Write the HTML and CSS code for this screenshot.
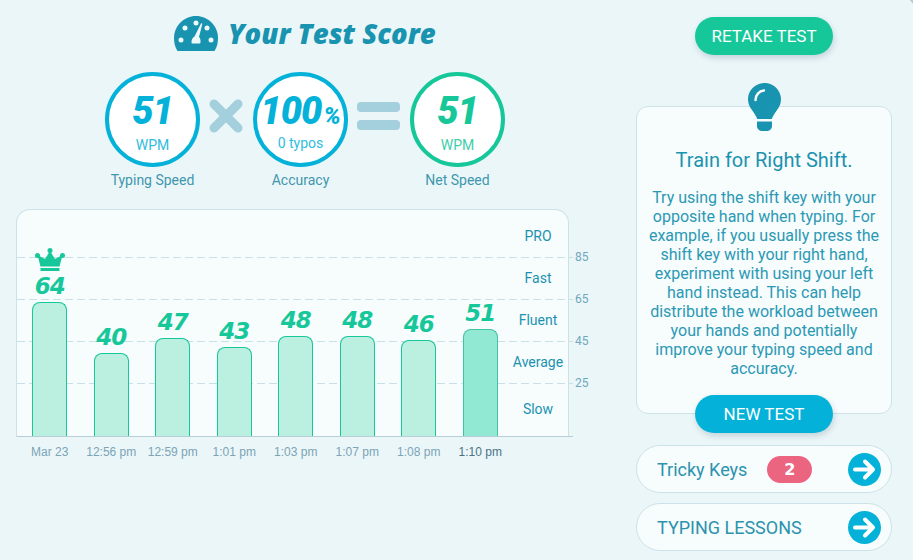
FILE: index.html
```html
<!DOCTYPE html>
<html lang="en">
<head>
  <meta charset="UTF-8">
  <title>Your Test Score</title>
  <link rel="stylesheet" href="styles.css">
</head>
<body>
<div class="corner"></div>
<div class="page">
  <div class="left">
    <h1 class="title">
      <svg class="gauge" viewBox="0 0 44 36" width="44" height="36">
        <path fill="#1893b0" d="M22 1C10 1 0 11 0 23c0 5 1 9 3.500 13h37c2.500-4 3.500-8 3.500-13C44 11 34 1 22 1z"/>
        <g fill="#eef9fb">
          <circle cx="22" cy="8" r="2.500"/>
          <circle cx="11" cy="13" r="2.500"/>
          <circle cx="33" cy="13" r="2.500"/>
          <circle cx="7" cy="25" r="2.500"/>
          <circle cx="37" cy="25" r="2.500"/>
          <path d="M27 8.500c.6-.4 1.200-.2 1.300.5L25 22c1.300 1.300 1.800 3.300 1.500 5.500-.1.600-.5 1-1 1h-7c-.6 0-1-.4-1-1-.2-2.400 1-4.800 3-6z"/>
        </g>
      </svg>
      Your Test Score
    </h1>

    <div class="formula">
      <div class="stat">
        <div class="ring">
          <span class="big">51</span>
          <span class="unit">WPM</span>
        </div>
        <div class="stat-label">Typing Speed</div>
      </div>
      <svg class="op op-times" viewBox="0 0 34 34" width="34" height="34">
        <path d="M5 5l24 24M29 5L5 29" stroke="#a3d0dc" stroke-width="9" stroke-linecap="round"/>
      </svg>
      <div class="stat">
        <div class="ring">
          <span class="big">100<small>%</small></span>
          <span class="unit unit-typos">0 typos</span>
        </div>
        <div class="stat-label">Accuracy</div>
      </div>
      <div class="op op-equals"><i></i><i></i></div>
      <div class="stat">
        <div class="ring ring-green">
          <span class="big">51</span>
          <span class="unit">WPM</span>
        </div>
        <div class="stat-label">Net Speed</div>
      </div>
    </div>

    <div class="chart">
      <div class="zones">
        <div class="zone"><span class="zone-name">PRO</span><span class="tick">85</span></div>
        <div class="zone"><span class="zone-name">Fast</span><span class="tick">65</span></div>
        <div class="zone"><span class="zone-name">Fluent</span><span class="tick">45</span></div>
        <div class="zone"><span class="zone-name">Average</span><span class="tick">25</span></div>
        <div class="zone"><span class="zone-name">Slow</span></div>
      </div>
      <div class="bars">
        <div class="col">
          <svg class="crown" viewBox="0 0 30 23" width="30" height="23">
            <g fill="#16c79a">
              <circle cx="15" cy="2.500" r="2.500"/>
              <circle cx="2.500" cy="7.500" r="2.500"/>
              <circle cx="27.500" cy="7.500" r="2.500"/>
              <path d="M15 3l5 8 7.500-4-3 11.500h-19L2.500 7 10 11z"/>
              <path d="M5.500 20h19v3h-19z"/>
            </g>
          </svg>
          <span class="val">64</span><div class="bar" style="height:134px"></div>
        </div>
        <div class="col"><span class="val">40</span><div class="bar" style="height:83px"></div></div>
        <div class="col"><span class="val">47</span><div class="bar" style="height:98px"></div></div>
        <div class="col"><span class="val">43</span><div class="bar" style="height:89px"></div></div>
        <div class="col"><span class="val">48</span><div class="bar" style="height:100px"></div></div>
        <div class="col"><span class="val">48</span><div class="bar" style="height:100px"></div></div>
        <div class="col"><span class="val">46</span><div class="bar" style="height:96px"></div></div>
        <div class="col"><span class="val">51</span><div class="bar bar-now" style="height:107px"></div></div>
      </div>
    </div>
    <div class="times">
      <span>Mar 23</span>
      <span>12:56 pm</span>
      <span>12:59 pm</span>
      <span>1:01 pm</span>
      <span>1:03 pm</span>
      <span>1:07 pm</span>
      <span>1:08 pm</span>
      <span class="time-now">1:10 pm</span>
    </div>
  </div>

  <div class="right">
    <button class="pill pill-green">RETAKE TEST</button>
    <svg class="bulb" viewBox="0 0 33 48" width="33" height="48">
      <path fill="#1893b0" d="M16.500 0C7.400 0 0 7.300 0 16.300c0 4 1.400 7.300 3.600 10.200 2.400 3.200 4.700 6.700 5.600 9.500h14.600c.9-2.800 3.200-6.300 5.600-9.500 2.200-2.900 3.600-6.200 3.600-10.200C33 7.300 25.600 0 16.500 0zM9 38.500h15V43c0 2.800-2.200 5-5 5h-5c-2.800 0-5-2.200-5-5z"/>
      <path fill="none" stroke="#f7fcfd" stroke-width="2.500" stroke-linecap="round" d="M7.500 17c0-5 3.500-9 8.500-9.500"/>
    </svg>
    <div class="tip">
      <h2>Train for Right Shift.</h2>
      <p>Try using the shift key with your opposite hand when typing. For example, if you usually press the shift key with your right hand, experiment with using your left hand instead. This can help distribute the workload between your hands and potentially improve your typing speed and accuracy.</p>
    </div>
    <button class="pill pill-blue">NEW TEST</button>
    <div class="link-row">
      <span class="link-name">Tricky Keys</span>
      <span class="badge">2</span>
      <svg class="arrow" viewBox="0 0 33 33" width="33" height="33">
        <circle cx="16.500" cy="16.500" r="16.500" fill="#04b2d9"/>
        <path d="M7 16.500h17M17 8.500l8 8-8 8" fill="none" stroke="#fff" stroke-width="4" stroke-linecap="round" stroke-linejoin="round"/>
      </svg>
    </div>
    <div class="link-row link-row-last">
      <span class="link-name">TYPING LESSONS</span>
      <svg class="arrow" viewBox="0 0 33 33" width="33" height="33">
        <circle cx="16.500" cy="16.500" r="16.500" fill="#04b2d9"/>
        <path d="M7 16.500h17M17 8.500l8 8-8 8" fill="none" stroke="#fff" stroke-width="4" stroke-linecap="round" stroke-linejoin="round"/>
      </svg>
    </div>
  </div>
</div>
</body>
</html>
```

FILE: styles.css
```css
html, body {
  margin: 0;
  height: 560px;
  overflow: hidden;
}
body {
  position: relative;
  font-family: 'Roboto', sans-serif;
  background-color: #ebf6f9;
  color: #1b93b0;
}
.corner {
  position: absolute;
  left: 907px;
  top: -28px;
  width: 32px;
  height: 32px;
  border: 2px solid #a9ccd6;
  border-radius: 50%;
}
.page {
  display: flex;
  align-items: flex-start;
}
.left {
  width: 636px;
  flex: none;
  padding-left: 16px;
  box-sizing: border-box;
}
.right {
  width: 256px;
  flex: none;
  display: flex;
  flex-direction: column;
  align-items: center;
  padding-top: 17px;
}

/* heading */
.title {
  display: flex;
  align-items: center;
  gap: 10px;
  height: 36px;
  margin: 15px 0 0 158px;
  font-family: 'Open Sans', sans-serif;
  font-style: italic;
  font-weight: 800;
  font-size: 27.5px;
  color: #1893b0;
  white-space: nowrap;
}

/* score circles */
.formula {
  display: flex;
  align-items: flex-start;
  margin: 21px 0 0 89px;
}
.stat {
  width: 95px;
  flex: none;
}
.ring {
  width: 95px;
  height: 95px;
  box-sizing: border-box;
  border: 4px solid #04b2d9;
  border-radius: 50%;
  background: #fff;
  color: #04b2d9;
  display: flex;
  flex-direction: column;
  align-items: center;
  white-space: nowrap;
}
.ring-green {
  border-color: #16c79a;
  color: #16c79a;
}
.big {
  height: 38px;
  font-style: italic;
  font-weight: 900;
  font-size: 38px;
  line-height: 38px;
  margin-top: 16px;
  letter-spacing: -1px;
}
.big small {
  font-size: 24px;
  letter-spacing: 0;
  margin-left: 2px;
}
.unit {
  font-size: 14px;
  line-height: 16px;
  margin-top: 7px;
  opacity: 0.85;
}
.unit-typos {
  margin-top: 5px;
}
.stat-label {
  margin-top: 5px;
  font-size: 14px;
  line-height: 17px;
  text-align: center;
  white-space: nowrap;
  color: #3f97ad;
}
.op {
  flex: none;
}
.op-times {
  margin: 27px 10px 0 9px;
}
.op-equals {
  display: flex;
  flex-direction: column;
  gap: 8px;
  width: 43px;
  margin: 30px 10px 0 9px;
}
.op-equals i {
  display: block;
  height: 10px;
  border-radius: 4px;
  background: #a3d0dc;
}

/* chart */
.chart {
  position: relative;
  width: 553px;
  height: 228px;
  margin-top: 20px;
  box-sizing: border-box;
  border: 1px solid #cde2e8;
  border-bottom: 0;
  border-radius: 14px 14px 0 0;
  background: #f7fcfd;
}
.zones {
  display: flex;
  flex-direction: column;
  height: 227px;
}
.zone {
  position: relative;
  height: 42px;
  margin-right: -5px;
  padding: 0 5px 2px 0;
  box-sizing: border-box;
  display: flex;
  align-items: center;
  justify-content: flex-end;
  background: repeating-linear-gradient(90deg, #c8e0e8 0 8px, transparent 8px 12px) bottom / 100% 1px no-repeat;
}
.zone:first-child {
  height: 48px;
  padding-top: 4px;
  padding-bottom: 0;
}
.zone:last-child {
  flex: 1;
  background: none;
  border-bottom: 1px solid #b6cfd6;
}
.zone-name {
  width: 62px;
  margin-right: -1px;
  text-align: center;
  font-size: 14px;
  color: #1b93b0;
}
.tick {
  position: absolute;
  left: 558px;
  bottom: -7px;
  font-size: 12px;
  line-height: 16px;
  color: #6ea8bb;
}
.bars {
  position: absolute;
  left: 2px;
  bottom: 1px;
  height: 226px;
  display: flex;
  align-items: flex-end;
}
.col {
  width: 61.5px;
  display: flex;
  flex-direction: column;
  align-items: center;
}
.crown {
  margin-bottom: 2px;
}
.val {
  font-family: 'DejaVu Sans', sans-serif;
  font-style: italic;
  font-weight: 700;
  font-size: 23px;
  line-height: 26px;
  margin-bottom: 3px;
  letter-spacing: -1px;
  color: #16c79a;
}
.bar {
  width: 35px;
  box-sizing: border-box;
  border: 1px solid #16c79a;
  border-bottom: 0;
  border-radius: 8px 8px 0 0;
  background: #bbf0e1;
}
.bar-now {
  background: #92e9d3;
  border-color: #3fc4a3;
}
.times {
  display: flex;
  padding-left: 3px;
  margin-top: 7px;
  font-family: 'Liberation Sans', sans-serif;
  font-size: 12px;
  line-height: 16px;
  color: #7ba4b6;
}
.times span {
  width: 61.5px;
  flex: none;
  text-align: center;
  white-space: nowrap;
}
.times .time-now {
  color: #4a7486;
}

/* right column */
.pill {
  width: 138px;
  height: 38px;
  padding: 0;
  border: none;
  border-radius: 19px;
  font-family: 'Roboto', sans-serif;
  font-size: 17px;
  color: #fff;
  box-shadow: 1px 3px 6px rgba(0,60,80,0.18);
  position: relative;
}
.pill-green {
  background: #16c79a;
}
.pill-blue {
  background: #04b2d9;
  margin-top: -19px;
}
.bulb {
  margin-top: 28px;
  position: relative;
  z-index: 1;
}
.tip {
  width: 256px;
  height: 308px;
  margin-top: -25px;
  box-sizing: border-box;
  border: 1px solid #cde2e8;
  border-radius: 12px;
  background: #f7fcfd;
  padding: 40px 8px 0;
  text-align: center;
}
.tip h2 {
  margin: 0;
  font-weight: 400;
  font-size: 20px;
  line-height: 26px;
  color: #1b93b0;
}
.tip p {
  margin: 15px 0 0;
  font-size: 16px;
  line-height: 19px;
  color: #2b99b4;
}
.link-row {
  width: 256px;
  height: 48px;
  box-sizing: border-box;
  margin-top: 12px;
  border: 1px solid #cde2e8;
  border-radius: 24px;
  background: #f7fcfd;
  display: flex;
  align-items: center;
  padding: 0 10px 0 20px;
}
.link-row-last {
  margin-top: 10px;
}
.link-name {
  font-size: 18px;
  color: #2b93ad;
}
.badge {
  width: 45px;
  height: 27px;
  margin-left: 20px;
  border-radius: 14px;
  background: #ec6580;
  color: #fff;
  font-family: 'DejaVu Sans', sans-serif;
  font-weight: 700;
  font-size: 16px;
  line-height: 27px;
  text-align: center;
}
.arrow {
  margin-left: auto;
}
```
